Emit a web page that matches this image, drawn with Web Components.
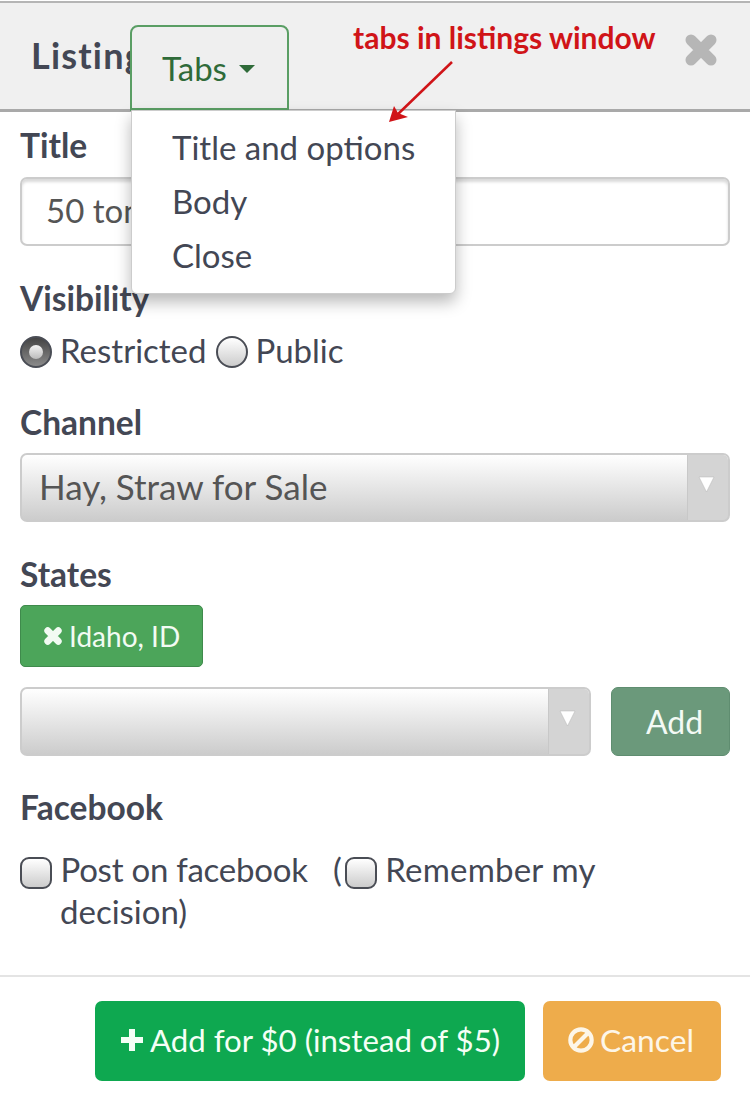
<!DOCTYPE html>
<html lang="en">
<head>
<meta charset="utf-8">
<title>Listing</title>
<style>
  html, body { margin: 0; background: #fff; }
  body { font-family: "Lato", "Noto Sans", sans-serif; color: #434754; width: 750px; height: 1103px; overflow: hidden; }
  .choices { display: flex; align-items: center; font-size: 33px; height: 42px; }
  .choices span { margin-bottom: 4px; }
</style>
</head>
<body>
<listing-window>
  <span slot="title">Listing</span>
  <form-field label="Title" gap="11"><text-box value="50 tons of hay"></text-box></form-field>
  <form-field label="Visibility" top="35">
    <div class="choices">
      <tick-box kind="radio" checked style="margin-right:8px"></tick-box><span>Restricted</span>
      <tick-box kind="radio" style="margin:0 8px 0 9px"></tick-box><span>Public</span>
    </div>
  </form-field>
  <form-field label="Channel" top="32" gap="10"><select-box value="Hay, Straw for Sale"></select-box></form-field>
  <form-field label="States" top="35" gap="10">
    <state-tag>Idaho, ID</state-tag>
    <div style="display:flex;gap:20px;margin-top:20px">
      <select-box style="flex:1"></select-box>
      <add-button>Add</add-button>
    </div>
  </form-field>
  <form-field label="Facebook" top="34" gap="20">
    <fb-options></fb-options>
  </form-field>
</listing-window>

<script>
class ListingWindow extends HTMLElement {
  constructor() {
    super();
    this.attachShadow({ mode: 'open' });
    this.shadowRoot.innerHTML = `
      <style>
        :host { display: block; position: relative; height: 1103px; box-sizing: border-box; padding-top: 1px; }
        .head { height: 111px; box-sizing: border-box; background: #f0f0f0;
          border-top: 2px solid #b5b5b5; border-bottom: 3px solid #a9a9a9;
          display: flex; align-items: center; justify-content: space-between; padding: 0 33px 0 31px; }
        .head h1 { margin: 0 0 2px; font-size: 36px; font-weight: 700; letter-spacing: 1.200px; color: #434754; }
        .close { width: 32px; height: 32px; margin-bottom: 12px; }
        .tabs { position: absolute; left: 130px; top: 25px; width: 159px; height: 86px; box-sizing: border-box;
          border: 2px solid #5a9e64; border-bottom-width: 3px; border-radius: 8px 8px 0 0; background: #efefef;
          color: #2f6b39; font-size: 33px; display: flex; align-items: center; gap: 12px; padding: 0 0 0 30px; }
        .tabs i { border: 8px solid transparent; border-top-color: #2f6b39; border-bottom: 0; margin-top: 2px; }
        .menu { position: absolute; left: 131px; top: 110px; width: 325px; height: 184px; box-sizing: border-box;
          background: #fff; border-radius: 0 0 6px 6px; border: 1px solid #ccc; padding: 9px 0 0 40px;
          box-shadow: 0 8px 16px rgba(0,0,0,.28); font-size: 33px; }
        .menu div { height: 54px; line-height: 54px; }
        .note { position: absolute; left: 353px; top: 19px; font: 700 30px "Lato", sans-serif; color: #d01418; white-space: nowrap; }
        .arrow { position: absolute; left: 385px; top: 58px; width: 72px; height: 68px; }
        .body { padding: 0 20px; display: block; }
        .foot { position: absolute; left: 0; right: 0; top: 975px; border-top: 2px solid #e4e4e4; padding: 24px 29px 0 0;
          display: flex; justify-content: flex-end; gap: 18px; }
        .btn { height: 80px; box-sizing: border-box; border-radius: 7px; color: #f4fff6; font-size: 31.200px;
          display: flex; align-items: center; gap: 6px; white-space: nowrap; padding-bottom: 3px; }
        .save { width: 430px; background: #0ea850; padding-left: 25px; }
        .cancel { width: 178px; background: #eeac4b; padding-left: 25px; color: #fdf6e8; font-size: 31.800px; }
      </style>
      <div class="head"><h1><slot name="title"></slot></h1>
        <svg class="close" viewBox="0 0 32 32"><path d="M6 6 26 26M26 6 6 26" stroke="#b6b6b6" stroke-width="11" stroke-linecap="round"/></svg>
      </div>
      <div class="body"><slot></slot></div>
      <div class="tabs">Tabs <i></i></div>
      <div class="menu"><div>Title and options</div><div>Body</div><div>Close</div></div>
      <div class="note">tabs in listings window</div>
      <svg class="arrow" viewBox="0 0 72 68"><path d="M67 4 12 57" stroke="#d01418" stroke-width="2.500" fill="none"/><path d="M4 64 9 48 13 55 23 59z" fill="#d01418"/></svg>
      <div class="foot">
        <div class="btn save"><svg width="24" height="24" viewBox="0 0 24 24"><path d="M9 1h6v8h8v6h-8v8H9v-8H1V9h8z" fill="currentColor"/></svg>Add for $0 (instead of $5)</div>
        <div class="btn cancel"><svg width="26" height="26" viewBox="0 0 28 28" fill="none" stroke="currentColor" stroke-width="4.500"><circle cx="14" cy="14" r="11.500"/><path d="M7 21 21 7"/></svg>Cancel</div>
      </div>`;
  }
}

class FormField extends HTMLElement {
  constructor() {
    super();
    this.attachShadow({ mode: 'open' });
  }
  connectedCallback() {
    const gap = Number(this.getAttribute('gap') || 12) + 4;
    const top = this.getAttribute('top') || 16;
    this.shadowRoot.innerHTML = `
      <style>
        :host { display: block; margin-top: ${top}px; }
        label { display: block; font-size: 33.500px; font-weight: 700; line-height: 34px; margin-bottom: ${gap}px; color: #434754; }
      </style>
      <label>${this.getAttribute('label')}</label>
      <slot></slot>`;
  }
}

class TextBox extends HTMLElement {
  constructor() {
    super();
    this.attachShadow({ mode: 'open' });
  }
  connectedCallback() {
    this.shadowRoot.innerHTML = `
      <style>
        :host { display: block; height: 69px; box-sizing: border-box; border: 2px solid #ccc; border-radius: 7px;
          box-shadow: inset 0 3px 3px rgba(0,0,0,.15); padding: 0 24px; font-size: 33px; line-height: 63px; color: #555; }
      </style>${this.getAttribute('value')}`;
  }
}

class SelectBox extends HTMLElement {
  constructor() {
    super();
    this.attachShadow({ mode: 'open' });
  }
  connectedCallback() {
    this.shadowRoot.innerHTML = `
      <style>
        :host { display: flex; height: 69px; box-sizing: border-box; border: 2px solid #ccc; border-radius: 7px;
          background: linear-gradient(#fff, #ccc); font-size: 35px; color: #555; overflow: hidden; }
        .val { flex: 1; padding-left: 17px; line-height: 63px; }
        .drop { width: 40px; background: #d4d4d4; border-left: 1px solid #c8c8c8; display: flex; align-items: center; justify-content: center; }
        .drop svg { margin: 0 3px 6px 0; }
      </style>
      <span class="val">${this.getAttribute('value') || ''}</span>
      <span class="drop"><svg width="17" height="17" viewBox="0 0 17 17"><path d="M1 1h15L8.500 16z" fill="#fff" stroke="#b5b5b5" stroke-width=".5"/></svg></span>`;
  }
}

class TickBox extends HTMLElement {
  constructor() {
    super();
    this.attachShadow({ mode: 'open' });
  }
  connectedCallback() {
    const radio = this.getAttribute('kind') === 'radio';
    const on = this.hasAttribute('checked');
    this.shadowRoot.innerHTML = `
      <style>
        :host { display: inline-block; flex: none; width: 32px; height: 32px; box-sizing: border-box; border: 2px solid #4a4d55;
          border-radius: ${radio ? '50%' : '9px'}; background: ${on ? 'linear-gradient(#444, #8a8a8a)' : 'linear-gradient(#fff, #ccc)'};
          position: relative; }
        i { position: absolute; left: 7px; top: 7px; width: 14px; height: 14px; border-radius: 50%; background: linear-gradient(#f4f4f4, #bbb); }
      </style>${on ? '<i></i>' : ''}`;
  }
}

class StateTag extends HTMLElement {
  constructor() {
    super();
    this.attachShadow({ mode: 'open' });
    this.shadowRoot.innerHTML = `
      <style>
        :host { display: flex; align-items: center; gap: 6px; width: 183px; height: 62px; box-sizing: border-box; padding-left: 22px;
          background: #4ca55a; border: 1px solid #3f8a4c; border-radius: 5px; color: #f2fbf3; font-size: 28px; }
      </style>
      <svg width="20" height="20" viewBox="0 0 19 19"><path d="M4.500 4.500 14.500 14.500M14.500 4.500 4.500 14.500" stroke="currentColor" stroke-width="6.500" stroke-linecap="round"/></svg><slot></slot>`;
  }
}

class AddButton extends HTMLElement {
  constructor() {
    super();
    this.attachShadow({ mode: 'open' });
    this.shadowRoot.innerHTML = `
      <style>
        :host { display: flex; align-items: center; justify-content: center; width: 119px; height: 69px; box-sizing: border-box;
          background: #6b997b; border: 1px solid #5f8d70; border-radius: 7px; color: #f3faf5; font-size: 32px; padding-left: 8px; }
      </style><slot></slot>`;
  }
}

class FbOptions extends HTMLElement {
  constructor() {
    super();
    this.attachShadow({ mode: 'open' });
    this.shadowRoot.innerHTML = `
      <style>
        :host { display: block; font-size: 33px; line-height: 42px; padding-left: 40px; text-indent: -40px; }
        tick-box { vertical-align: -7px; text-indent: 0; }
        tick-box.second { margin-left: 3px; }
        .post { letter-spacing: -.25px; }
        .rem { letter-spacing: .2px; }
      </style>
      <tick-box kind="check"></tick-box> <span class="post">Post on facebook</span> &nbsp; (<tick-box class="second" kind="check"></tick-box> <span class="rem">Remember my</span><br>decision)`;
  }
}

customElements.define('tick-box', TickBox);
customElements.define('listing-window', ListingWindow);
customElements.define('form-field', FormField);
customElements.define('text-box', TextBox);
customElements.define('select-box', SelectBox);
customElements.define('state-tag', StateTag);
customElements.define('add-button', AddButton);
customElements.define('fb-options', FbOptions);
</script>
</body>
</html>
